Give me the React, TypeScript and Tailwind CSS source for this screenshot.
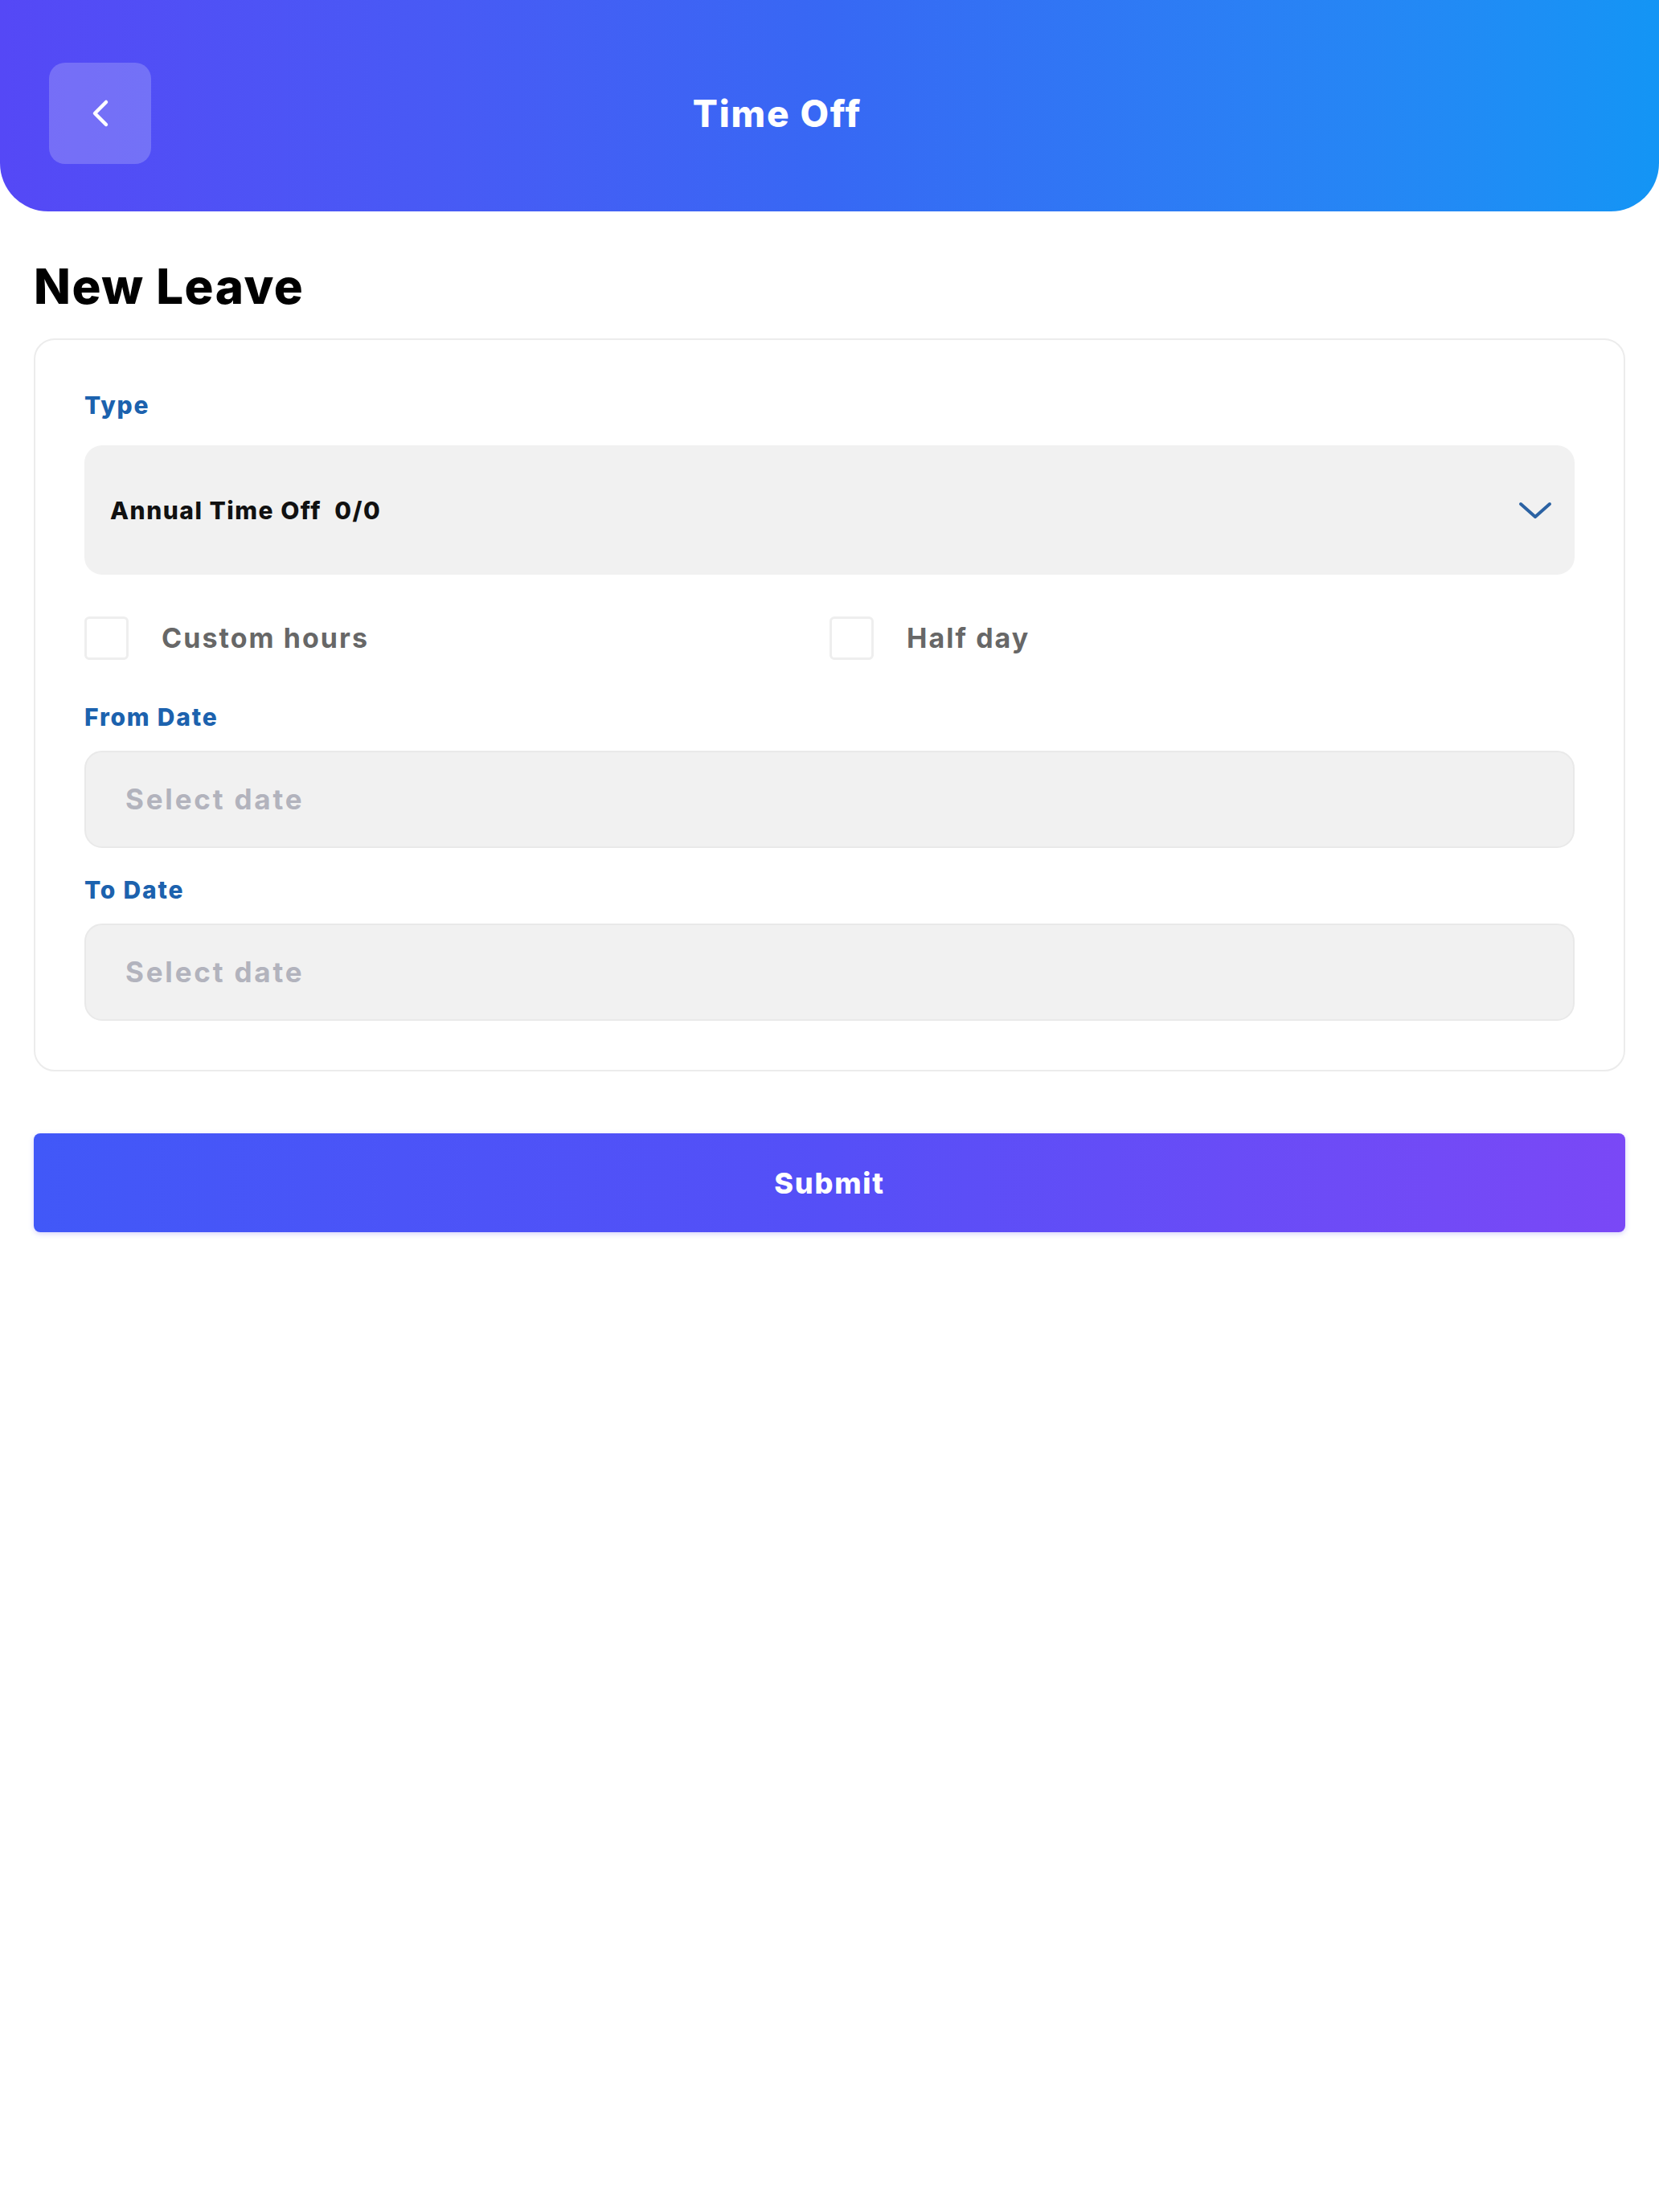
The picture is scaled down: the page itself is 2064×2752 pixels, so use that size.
import React from "react";

function ChevronLeft() {
  return (
    <svg width="24" height="36" viewBox="0 0 24 36" fill="none">
      <polyline points="19,4 5,18 19,32" stroke="#ffffff" strokeWidth="4.5" strokeLinecap="round" strokeLinejoin="round" />
    </svg>
  );
}

function ChevronDown() {
  return (
    <svg width="42" height="22" viewBox="0 0 42 22" fill="none">
      <polyline points="3,3 21,19 39,3" stroke="#2b62a3" strokeWidth="4" strokeLinecap="round" strokeLinejoin="round" />
    </svg>
  );
}

function Checkbox({ label }: { label: string }) {
  return (
    <label className="flex items-center gap-[41px]">
      <span className="w-[55px] h-[54px] rounded-[6px] border-[3px] border-[#eeeeee] bg-white" />
      <span className="text-[34px] font-bold leading-none tracking-[0.06em] text-[#676767]">{label}</span>
    </label>
  );
}

function DateField({ label, top }: { label: string; top: string }) {
  return (
    <div className={top}>
      <div className="text-[30px] font-extrabold leading-none tracking-[0.06em] text-[#1c62ae]">{label}</div>
      <div className="mt-[27px] h-[121px] rounded-[22px] border-2 border-[#e9e9e9] bg-[#f1f1f1] pl-[49px] flex items-center">
        <span className="text-[35px] font-bold leading-none tracking-[0.08em] text-[#b2b3bd]">Select date</span>
      </div>
    </div>
  );
}

export default function App() {
  return (
    <div className="w-[2064px] min-h-[2752px] bg-white font-['Inter','Noto_Sans',sans-serif]">
      <header className="h-[263px] rounded-b-[60px] bg-gradient-to-r from-[#5548f6] via-[#3768f4] to-[#1395f5] flex items-center px-[61px] pt-[18px]">
        <button className="w-[127px] h-[126px] rounded-[20px] bg-white/20 flex items-center justify-center">
          <ChevronLeft />
        </button>
        <h1 className="flex-1 text-center text-[46px] font-extrabold leading-none tracking-[0.04em] text-white">Time Off</h1>
        <div className="w-[257px]" />
      </header>

      <main className="px-[42px]">
        <h2 className="mt-[63px] text-[60px] font-extrabold leading-none tracking-[0.025em] text-black">New Leave</h2>

        <section className="mt-[35px] rounded-[26px] border-2 border-[#ececec] px-[61px] pt-[66px] pb-[61px]">
          <div className="text-[30px] font-extrabold leading-none tracking-[0.06em] text-[#1c62ae]">Type</div>
          <div className="mt-[35px] h-[161px] rounded-[22px] bg-[#f1f1f1] pl-[32px] pr-[28px] flex items-center justify-between">
            <span className="text-[30px] font-extrabold leading-none tracking-[0.05em] text-[#111111]">Annual Time Off&nbsp; 0/0</span>
            <ChevronDown />
          </div>

          <div className="mt-[52px] grid grid-cols-2">
            <Checkbox label="Custom hours" />
            <Checkbox label="Half day" />
          </div>

          <DateField label="From Date" top="mt-[56px]" />
          <DateField label="To Date" top="mt-[37px]" />
        </section>

        <button className="mt-[77px] w-full h-[123px] rounded-[8px] bg-gradient-to-r from-[#4158f8] via-[#554ff7] to-[#7a48f6] flex items-center justify-center shadow-[0_2px_6px_rgba(90,80,240,0.25)]">
          <span className="text-[36px] font-extrabold leading-none tracking-[0.05em] text-white">Submit</span>
        </button>
      </main>
    </div>
  );
}
